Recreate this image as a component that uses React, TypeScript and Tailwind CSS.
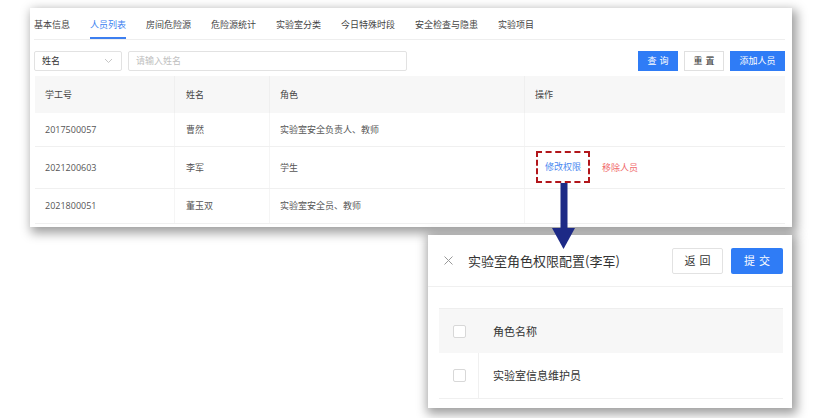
import React from "react";

const font = { fontFamily: '"Noto Sans CJK SC", "Noto Sans", sans-serif' };

function Chevron() {
  return (
    <svg width="9" height="6" viewBox="0 0 9 6" fill="none">
      <path d="M1 1l3.5 3.5L8 1" stroke="#c0c0c0" strokeWidth="0.9" />
    </svg>
  );
}

export default function App() {
  const tabs = ["基本信息", "人员列表", "房间危险源", "危险源统计", "实验室分类", "今日特殊时段", "安全检查与隐患", "实验项目"];
  const rows = [
    { id: "2017500057", name: "曹然", role: "实验室安全负责人、教师", h: "h-[34px]", ops: false },
    { id: "2021200603", name: "李军", role: "学生", h: "h-[42px]", ops: true },
    { id: "2021800051", name: "董玉双", role: "实验室安全员、教师", h: "h-[35px]", ops: false },
  ];
  return (
    <div className="relative w-[821px] h-[418px] bg-white overflow-hidden" style={font}>
      {/* Panel 1 */}
      <div className="absolute left-[30px] top-[8px] w-[762px] h-[219px] bg-white shadow-[3px_4px_10px_2px_rgba(0,0,0,0.38)] pl-[4px] pr-[7px] flex flex-col">
        <div className="h-[32px] flex items-end gap-5 border-b border-[#eeeeee]">
          {tabs.map((t, i) => (
            <div
              key={t}
              className={
                "h-[20px] text-[9px] leading-[12px] whitespace-nowrap " +
                (i === 1 ? "text-[#3d7ff0] border-b-2 border-[#3d7ff0]" : "text-[#444444] border-b-2 border-transparent")
              }
            >
              {t}
            </div>
          ))}
        </div>
        <div className="mt-[11px] flex items-center h-[20px]">
          <div className="w-[88px] h-[20px] border border-[#e2e2e2] rounded-[2px] flex items-center justify-between pl-[7px] pr-[4px] text-[9px] text-[#333333]">
            <span>姓名</span>
            <span className="mr-[4px]"><Chevron /></span>
          </div>
          <div className="ml-[6px] w-[279px] h-[20px] border border-[#e2e2e2] rounded-[2px] flex items-center pl-[7px] text-[9px] text-[#c0c0c0]">
            请输入姓名
          </div>
          <div className="ml-auto flex gap-[6px]">
            <div className="w-[40px] h-[20px] bg-[#2f7cf6] text-white text-[9px] flex items-center justify-center tracking-[3px] pl-[3px]">查询</div>
            <div className="w-[40px] h-[20px] bg-white border border-[#e0e0e0] text-[#333333] text-[9px] flex items-center justify-center tracking-[3px] pl-[3px]">重置</div>
            <div className="w-[55px] h-[20px] bg-[#2f7cf6] text-white text-[9px] flex items-center justify-center">添加人员</div>
          </div>
        </div>
        <div className="mt-[5px] ml-[1px] text-[9px]">
          <div className="h-[37px] flex bg-[#f7f7f7] text-[#444444]">
            <div className="w-[140px] pl-[10px] flex items-center border-r border-[#efefef]">学工号</div>
            <div className="w-[95px] pl-[11px] flex items-center border-r border-[#efefef]">姓名</div>
            <div className="w-[255px] pl-[10px] flex items-center border-r border-[#efefef]">角色</div>
            <div className="flex-1 pl-[10px] flex items-center">操作</div>
          </div>
          {rows.map((r) => (
            <div key={r.id} className={"flex border-b border-[#f0f0f0] text-[#555555] " + r.h}>
              <div className="w-[140px] pl-[10px] flex items-center border-r border-[#f5f5f5]" style={{ fontFamily: '"Open Sans", "Noto Sans", sans-serif' }}>{r.id}</div>
              <div className="w-[95px] pl-[11px] flex items-center border-r border-[#f5f5f5]">{r.name}</div>
              <div className="w-[255px] pl-[10px] flex items-center border-r border-[#f5f5f5]">{r.role}</div>
              <div className="flex-1 pl-[11px] flex items-center">
                {r.ops && (
                  <>
                    <div className="h-[32px] mt-[-2px] px-[7px] border-2 border-dashed border-[#b2161b] flex items-center text-[#4a88f0]">修改权限</div>
                    <div className="ml-[12px] text-[#f0686a]">移除人员</div>
                  </>
                )}
              </div>
            </div>
          ))}
        </div>
      </div>

      {/* Panel 2 */}
      <div className="absolute left-[428px] top-[235px] w-[364px] h-[173px] bg-white shadow-[2px_3px_10px_3px_rgba(0,0,0,0.38)] flex flex-col">
        <div className="h-[52px] border-b border-[#f0f0f0] flex items-center pl-[16px] pr-[9px]">
          <svg width="9" height="9" viewBox="0 0 9 9" className="mt-[-1px]">
            <path d="M0.5 0.5l8 8M8.5 0.5l-8 8" stroke="#999999" strokeWidth="1" />
          </svg>
          <div className="ml-[15px] text-[13px] text-[#333333] whitespace-nowrap">实验室角色权限配置(李军)</div>
          <div className="ml-auto flex gap-[8px]">
            <div className="w-[51px] h-[26px] border border-[#e2e2e2] rounded-[2px] text-[11px] text-[#333333] flex items-center justify-center tracking-[4px] pl-[4px]">返回</div>
            <div className="w-[52px] h-[26px] bg-[#2f7cf6] rounded-[2px] text-[11px] text-white flex items-center justify-center tracking-[4px] pl-[4px]">提交</div>
          </div>
        </div>
        <div className="mt-[21px] ml-[11px] mr-[9px] text-[11px] text-[#333333]">
          <div className="h-[45px] flex bg-[#f7f7f7] border-t border-[#eeeeee]">
            <div className="w-[40px] flex items-center pl-[14px]">
              <div className="w-[13px] h-[13px] border border-[#d8d8d8] rounded-[2px] bg-white" />
            </div>
            <div className="flex-1 pl-[14px] flex items-center">角色名称</div>
          </div>
          <div className="h-[46px] flex border-b border-[#f0f0f0]">
            <div className="w-[40px] flex items-center pl-[14px] border-r border-[#f0f0f0]">
              <div className="w-[13px] h-[13px] border border-[#d8d8d8] rounded-[2px] bg-white" />
            </div>
            <div className="flex-1 pl-[14px] flex items-center">实验室信息维护员</div>
          </div>
        </div>
      </div>

      {/* Arrow */}
      <svg className="absolute left-[552px] top-[183px]" width="24" height="67" viewBox="0 0 24 67">
        <rect x="8.5" y="0" width="7" height="47" fill="#1d2a86" />
        <polygon points="0,45 23,45 11.5,66" fill="#1d2a86" />
      </svg>
    </div>
  );
}
